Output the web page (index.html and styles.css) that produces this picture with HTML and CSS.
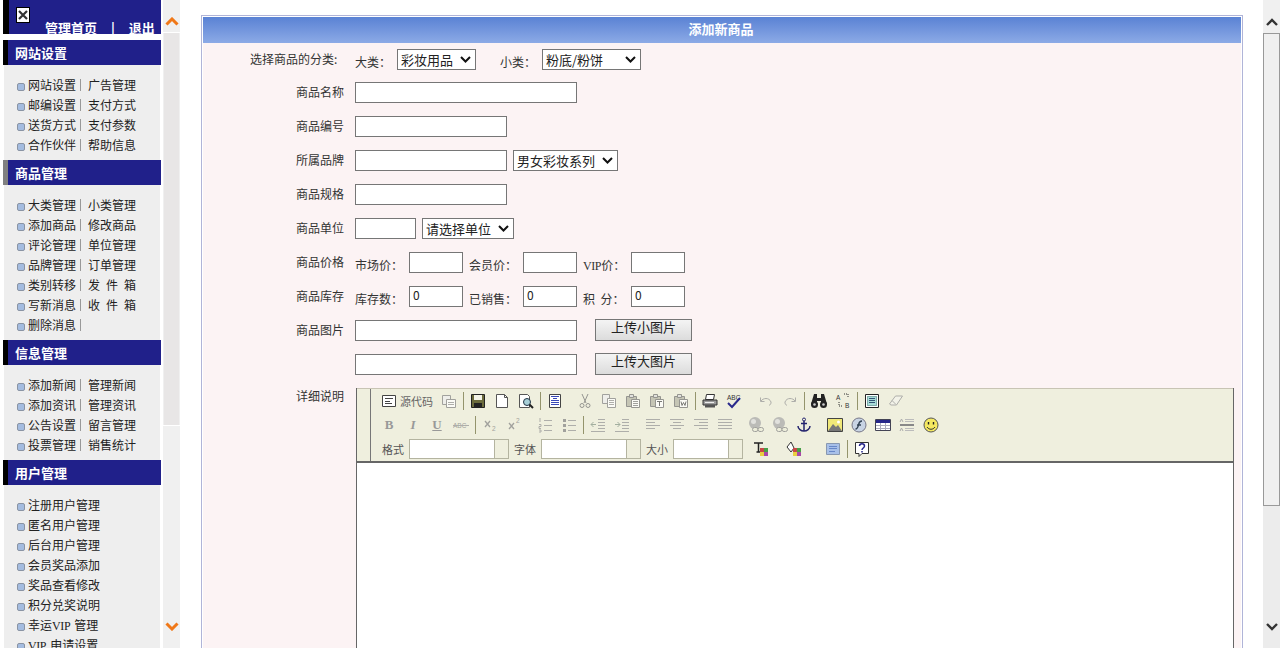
FILE: index.html
```html
<!DOCTYPE html>
<html lang="zh-CN">
<head>
    <meta charset="UTF-8">
    <title>添加新商品</title>
    <link rel="stylesheet" href="styles.css">
</head>
<body>
<svg class="sprite" width="0" height="0">
    <symbol id="i-source" viewBox="0 0 16 16"><path d="M1.5 2.500h13v11h-13z" fill="#fff" stroke="#444"/><path d="M4 5.500h8M4 8.500h5M4 10.500h7" stroke="#444"/></symbol>
    <symbol id="i-template" viewBox="0 0 16 16"><path d="M1.5 2.500h8v9h-8z" fill="#eee" stroke="#888"/><path d="M5.500 6.500h9v8h-9z" fill="#fff" stroke="#888"/><path d="M7 9.500h6M7 11.500h6" stroke="#999"/></symbol>
    <symbol id="i-save" viewBox="0 0 16 16"><path d="M1.500 1.500h13v13h-13z" fill="#6b6b3c" stroke="#222"/><path d="M4 2h8v5H4z" fill="#f4f4e8"/><path d="M4 10h8v5H4z" fill="#222"/></symbol>
    <symbol id="i-new" viewBox="0 0 16 16"><path d="M2.500 1.500h8l3 3v10h-11z" fill="#fff" stroke="#555"/><path d="M10.500 1.500v3h3" fill="none" stroke="#555"/></symbol>
    <symbol id="i-preview" viewBox="0 0 16 16"><path d="M1.500 1.500h8l2 2v11h-10z" fill="#fff" stroke="#555"/><circle cx="9" cy="9" r="3.500" fill="#a8d0d8" stroke="#234"/><path d="M11.500 11.500l3.500 3.500" stroke="#222" stroke-width="2"/></symbol>
    <symbol id="i-doc" viewBox="0 0 16 16"><path d="M2.500 1.500h11v13h-11z" fill="#fff" stroke="#444"/><path d="M4 3.500h8M6 5.500h4M4 7.500h8M4 9.500h8M4 11.500h8" stroke="#3848b8"/></symbol>
    <symbol id="i-cut" viewBox="0 0 16 16"><path d="M5 1l4 9M11 1l-4 9" stroke="#777" fill="none"/><circle cx="5" cy="12.500" r="2" fill="none" stroke="#777"/><circle cx="11" cy="12.500" r="2" fill="none" stroke="#777"/></symbol>
    <symbol id="i-copy" viewBox="0 0 16 16"><path d="M1.500 1.500h7v9h-7z" fill="#eee" stroke="#888"/><path d="M6.500 5.500h8v9h-8z" fill="#fff" stroke="#888"/><path d="M8 7.500h5M8 9.500h5M8 11.500h5" stroke="#999"/></symbol>
    <symbol id="i-paste" viewBox="0 0 16 16"><path d="M1.500 3.500h10v10h-10z" fill="#b8b8a8" stroke="#777"/><path d="M4.500 1.500h4v3h-4z" fill="#ddd" stroke="#777"/><path d="M6.500 6.500h8v8h-8z" fill="#fff" stroke="#777"/><path d="M8 8.500h5M8 10.500h5M8 12.500h5" stroke="#888"/></symbol>
    <symbol id="i-paste-t" viewBox="0 0 16 16"><path d="M1.500 3.500h10v10h-10z" fill="#b8b8a8" stroke="#777"/><path d="M4.500 1.500h4v3h-4z" fill="#ddd" stroke="#777"/><path d="M6.500 6.500h8v8h-8z" fill="#fff" stroke="#777"/><path d="M8 8.500h5M10.500 8.500v4.500" stroke="#555"/></symbol>
    <symbol id="i-paste-w" viewBox="0 0 16 16"><path d="M1.500 3.500h10v10h-10z" fill="#b8b8a8" stroke="#777"/><path d="M4.500 1.500h4v3h-4z" fill="#ddd" stroke="#777"/><path d="M6.500 6.500h8v8h-8z" fill="#fff" stroke="#777"/><path d="M8 8.500l1 4 1.500-3 1.500 3 1-4" fill="none" stroke="#555"/></symbol>
    <symbol id="i-print" viewBox="0 0 16 16"><path d="M4.500 1.500h8l-1 5h-8z" fill="#fff" stroke="#333"/><path d="M1 7h14v5H1z" fill="#9a9a9a" stroke="#333"/><path d="M3 12h10v2.500H3z" fill="#555"/><path d="M3 9.500h9" stroke="#eee"/></symbol>
    <symbol id="i-undo" viewBox="0 0 16 16"><path d="M2.500 4.500v4h4M3 8c2-3 8-4 10 1 .4 1.500-1 3-2 3.500" fill="none" stroke="#999"/></symbol>
    <symbol id="i-redo" viewBox="0 0 16 16"><path d="M13.500 4.500v4h-4M13 8c-2-3-8-4-10 1-.4 1.500 1 3 2 3.500" fill="none" stroke="#999"/></symbol>
    <symbol id="i-find" viewBox="0 0 16 16"><path d="M3 1h3v4h4V1h3l3 10H10V8H6v3H0z" fill="#222"/><circle cx="3.500" cy="11.500" r="3.500" fill="#222"/><circle cx="12.500" cy="11.500" r="3.500" fill="#222"/><circle cx="3.500" cy="11.500" r="1.300" fill="#ccc"/><circle cx="12.500" cy="11.500" r="1.300" fill="#ccc"/></symbol>
    <symbol id="i-selall" viewBox="0 0 16 16"><path d="M1.500 1.500h13v13h-13z" fill="#fff" stroke="#222"/><path d="M3.500 3.500h9v9h-9z" fill="#a8dcd8" stroke="#2a6a68" stroke-dasharray="1 1"/><path d="M5 5.500h6M5 7.500h6M5 9.500h6" stroke="#357"/></symbol>
    <symbol id="i-erase" viewBox="0 0 16 16"><path d="M1.500 11l6-8h7l-6 9H3z" fill="#f4f4ec" stroke="#999"/><path d="M4 7.500l4 4" stroke="#999"/></symbol>
    <symbol id="i-ol" viewBox="0 0 16 16"><path d="M7 3.500h8M7 8.500h8M7 13.500h8" stroke="#999"/><path d="M3 1v4M2 7.500h2v2H2v2h2M2 13h2v2H2" fill="none" stroke="#999"/></symbol>
    <symbol id="i-ul" viewBox="0 0 16 16"><path d="M7 3.500h8M7 8.500h8M7 13.500h8" stroke="#999"/><path d="M2 2h3v3H2zM2 7h3v3H2zM2 12h3v3H2z" fill="#888"/></symbol>
    <symbol id="i-outdent" viewBox="0 0 16 16"><path d="M8 2.500h7M8 5.500h7M8 8.500h7M8 11.500h7M1 14.500h14" stroke="#999"/><path d="M1 7.500h5M3.500 5L1 7.500 3.500 10" fill="none" stroke="#8a9a8a"/></symbol>
    <symbol id="i-indent" viewBox="0 0 16 16"><path d="M8 2.500h7M8 5.500h7M8 8.500h7M8 11.500h7M1 14.500h14" stroke="#999"/><path d="M1 7.500h5M3.500 5L6 7.500 3.500 10" fill="none" stroke="#8a9a8a"/></symbol>
    <symbol id="i-left" viewBox="0 0 16 16"><path d="M1 2.500h14M1 5.500h9M1 8.500h14M1 11.500h9" stroke="#999"/></symbol>
    <symbol id="i-center" viewBox="0 0 16 16"><path d="M1 2.500h14M4 5.500h8M1 8.500h14M4 11.500h8" stroke="#999"/></symbol>
    <symbol id="i-right" viewBox="0 0 16 16"><path d="M1 2.500h14M6 5.500h9M1 8.500h14M6 11.500h9" stroke="#999"/></symbol>
    <symbol id="i-justify" viewBox="0 0 16 16"><path d="M1 2.500h14M1 5.500h14M1 8.500h14M1 11.500h14" stroke="#999"/></symbol>
    <symbol id="i-link" viewBox="0 0 16 16"><circle cx="7" cy="6" r="6" fill="#aaa"/><circle cx="5.500" cy="4.500" r="2.500" fill="#ddd"/><rect x="4.500" y="10.500" width="5.500" height="4" rx="2" fill="#ecedd9" stroke="#888"/><rect x="10" y="10.500" width="5.500" height="4" rx="2" fill="#ecedd9" stroke="#888"/></symbol>
    <symbol id="i-anchor" viewBox="0 0 16 16"><circle cx="8" cy="2.500" r="1.500" fill="none" stroke="#24246e"/><path d="M8 4v10M5 6.500h6" stroke="#24246e" stroke-width="1.500"/><path d="M2 9c0 3 3 5 6 5s6-2 6-5" fill="none" stroke="#24246e" stroke-width="1.500"/></symbol>
    <symbol id="i-image" viewBox="0 0 16 16"><path d="M.5 1.500h15v13H.5z" fill="#f0e878" stroke="#444"/><path d="M1 14l5-7 3 3 2-2 4 6z" fill="#777"/><circle cx="11.500" cy="5" r="1.500" fill="#fff"/></symbol>
    <symbol id="i-flash" viewBox="0 0 16 16"><circle cx="8" cy="8" r="7" fill="#c8d4e4" stroke="#778"/><path d="M11 4C8 4 8 6 7.500 8S6 12 4.500 12M6 8h4" fill="none" stroke="#345" stroke-width="1.300"/></symbol>
    <symbol id="i-table" viewBox="0 0 16 16"><path d="M.5 2.500h15v11H.5z" fill="#fff" stroke="#445"/><path d="M1 3h14v3H1z" fill="#26268a"/><path d="M1 8.500h14M1 11.500h14M5.500 6v7M10.500 6v7" stroke="#aab"/></symbol>
    <symbol id="i-hr" viewBox="0 0 16 16"><path d="M1 8h14" stroke="#888" stroke-width="2"/><path d="M6 2.500h9M6 4.500h9M6 11.500h9M6 13.500h9" stroke="#bbb"/><path d="M1 5l1.500-3L4 5M1 14l1.500-3L4 14" fill="none" stroke="#aaa"/></symbol>
    <symbol id="i-smile" viewBox="0 0 16 16"><circle cx="8" cy="8" r="7" fill="#f4e860" stroke="#555"/><path d="M5.500 5v2.500M10.500 5v2.500" stroke="#222" stroke-width="1.400"/><path d="M4 10c2 3 6 3 8 0" fill="none" stroke="#333"/></symbol>
    <symbol id="i-color" viewBox="0 0 16 16"><path d="M1 2h9M5.500 2v9M3.500 11h4" stroke="#222" stroke-width="1.500"/><path d="M7 7h4v4H7z" fill="#c84848"/><path d="M11 7h4v4h-4z" fill="#48a048"/><path d="M7 11h4v4H7z" fill="#e8d040"/><path d="M11 11h4v4h-4z" fill="#a848a8"/></symbol>
    <symbol id="i-bgcolor" viewBox="0 0 16 16"><path d="M5 1L1 6l4 5 3-4z" fill="#fff" stroke="#333"/><path d="M7 7h4v4H7z" fill="#c84848"/><path d="M11 7h4v4h-4z" fill="#48a048"/><path d="M7 11h4v4H7z" fill="#e8d040"/><path d="M11 11h4v4h-4z" fill="#a848a8"/></symbol>
    <symbol id="i-block" viewBox="0 0 16 16"><path d="M1.500 2.500h13v11h-13z" fill="#a8c0e8" stroke="#8898b0"/><path d="M4 5.500h8M4 7.500h8M4 10.500h6" stroke="#6888c8"/></symbol>
    <symbol id="i-help" viewBox="0 0 16 16"><path d="M1.500 1.500h13v11H8l-3 3v-3H1.500z" fill="#fff" stroke="#333"/><path d="M5.500 5c0-3 5-3 5 0 0 2-2.500 2-2.500 4M8 10v1.500" fill="none" stroke="#26268a" stroke-width="1.500"/></symbol>
</svg>

<div class="page">
    <aside class="sidebar">
        <div class="top-bar">
            <span class="broken-img">
                <svg width="10" height="10" viewBox="0 0 10 10"><path d="M1 1l8 8M9 1l-8 8" stroke="#333" stroke-width="2.200"/></svg>
            </span>
            <div class="top-links">管理首页 <span class="top-sep">|</span> 退出</div>
        </div>

        <h3 class="menu-head">网站设置</h3>
        <ul class="menu">
            <li><span class="cell">网站设置</span><span class="bar"></span><span>广告管理</span></li>
            <li><span class="cell">邮编设置</span><span class="bar"></span><span>支付方式</span></li>
            <li><span class="cell">送货方式</span><span class="bar"></span><span>支付参数</span></li>
            <li><span class="cell">合作伙伴</span><span class="bar"></span><span>帮助信息</span></li>
        </ul>

        <h3 class="menu-head menu-head-gray">商品管理</h3>
        <ul class="menu">
            <li><span class="cell">大类管理</span><span class="bar"></span><span>小类管理</span></li>
            <li><span class="cell">添加商品</span><span class="bar"></span><span>修改商品</span></li>
            <li><span class="cell">评论管理</span><span class="bar"></span><span>单位管理</span></li>
            <li><span class="cell">品牌管理</span><span class="bar"></span><span>订单管理</span></li>
            <li><span class="cell">类别转移</span><span class="bar"></span><span class="wide">发件箱</span></li>
            <li><span class="cell">写新消息</span><span class="bar"></span><span class="wide">收件箱</span></li>
            <li><span class="cell">删除消息</span><span class="bar"></span></li>
        </ul>

        <h3 class="menu-head">信息管理</h3>
        <ul class="menu">
            <li><span class="cell">添加新闻</span><span class="bar"></span><span>管理新闻</span></li>
            <li><span class="cell">添加资讯</span><span class="bar"></span><span>管理资讯</span></li>
            <li><span class="cell">公告设置</span><span class="bar"></span><span>留言管理</span></li>
            <li><span class="cell">投票管理</span><span class="bar"></span><span>销售统计</span></li>
        </ul>

        <h3 class="menu-head">用户管理</h3>
        <ul class="menu">
            <li><span>注册用户管理</span></li>
            <li><span>匿名用户管理</span></li>
            <li><span>后台用户管理</span></li>
            <li><span>会员奖品添加</span></li>
            <li><span>奖品查看修改</span></li>
            <li><span>积分兑奖说明</span></li>
            <li><span>幸运<span class="latin">VIP </span>管理</span></li>
            <li><span><span class="latin">VIP </span>申请设置</span></li>
        </ul>
    </aside>

    <div class="side-scroll">
        <div class="side-cap">
            <svg width="14" height="9" viewBox="0 0 14 9"><path d="M1.500 7.500L7 2l5.500 5.500" fill="none" stroke="#f07818" stroke-width="3"/></svg>
        </div>
        <div class="side-track"></div>
        <div class="side-rest">
            <svg width="14" height="9" viewBox="0 0 14 9"><path d="M1.500 1.500L7 7l5.500-5.500" fill="none" stroke="#f07818" stroke-width="3"/></svg>
        </div>
    </div>

    <main class="main">
        <section class="panel">
            <h2 class="panel-title">添加新商品</h2>
            <div class="panel-body">
                <div class="row row-first">
                    <label class="row-label row-label-long">选择商品的分类:&nbsp;</label>
                    <div class="row-fields">
                        <span class="tag tag-big">大类：</span>
                        <select class="pick pick-big"><option>彩妆用品</option></select>
                        <span class="tag tag-small">小类：</span>
                        <select class="pick pick-small"><option>粉底/粉饼</option></select>
                    </div>
                </div>
                <div class="row">
                    <label class="row-label">商品名称</label>
                    <div class="row-fields"><input class="txt txt-long"></div>
                </div>
                <div class="row">
                    <label class="row-label">商品编号</label>
                    <div class="row-fields"><input class="txt txt-mid"></div>
                </div>
                <div class="row">
                    <label class="row-label">所属品牌</label>
                    <div class="row-fields gap6">
                        <input class="txt txt-mid">
                        <select class="pick pick-brand"><option>男女彩妆系列</option></select>
                    </div>
                </div>
                <div class="row">
                    <label class="row-label">商品规格</label>
                    <div class="row-fields"><input class="txt txt-mid"></div>
                </div>
                <div class="row">
                    <label class="row-label">商品单位</label>
                    <div class="row-fields gap6">
                        <input class="txt txt-unit">
                        <select class="pick pick-unit"><option>请选择单位</option></select>
                    </div>
                </div>
                <div class="row">
                    <label class="row-label">商品价格</label>
                    <div class="row-fields">
                        <span class="tag tag-price">市场价：</span><input class="txt txt-num">
                        <span class="tag tag-price tag-next">会员价：</span><input class="txt txt-num">
                        <span class="tag tag-price tag-last"><span class="latin">VIP</span>价：</span><input class="txt txt-num">
                    </div>
                </div>
                <div class="row">
                    <label class="row-label">商品库存</label>
                    <div class="row-fields">
                        <span class="tag tag-price">库存数：</span><input class="txt txt-num" value="0">
                        <span class="tag tag-price tag-next">已销售：</span><input class="txt txt-num" value="0">
                        <span class="tag tag-price tag-last">积&nbsp;&nbsp;分：</span><input class="txt txt-num" value="0">
                    </div>
                </div>
                <div class="row">
                    <label class="row-label">商品图片</label>
                    <div class="row-fields gap18">
                        <input class="txt txt-long">
                        <button class="upload">上传小图片</button>
                    </div>
                </div>
                <div class="row">
                    <label class="row-label"></label>
                    <div class="row-fields gap18">
                        <input class="txt txt-long">
                        <button class="upload">上传大图片</button>
                    </div>
                </div>
                <div class="row row-editor">
                    <label class="row-label">详细说明</label>
                    <div class="editor">
                        <div class="toolbar">
                            <div class="tool-row">
                                <span class="tool tool-text"><svg><use href="#i-source"/></svg>源代码</span>
                                <span class="tool off"><svg><use href="#i-template"/></svg></span>
                                <i class="sep"></i>
                                <span class="tool"><svg><use href="#i-save"/></svg></span>
                                <span class="tool"><svg><use href="#i-new"/></svg></span>
                                <span class="tool"><svg><use href="#i-preview"/></svg></span>
                                <i class="sep"></i>
                                <span class="tool"><svg><use href="#i-doc"/></svg></span>
                                <b class="gap"></b>
                                <span class="tool off"><svg><use href="#i-cut"/></svg></span>
                                <span class="tool off"><svg><use href="#i-copy"/></svg></span>
                                <span class="tool off"><svg><use href="#i-paste"/></svg></span>
                                <span class="tool off"><svg><use href="#i-paste-t"/></svg></span>
                                <span class="tool off"><svg><use href="#i-paste-w"/></svg></span>
                                <i class="sep"></i>
                                <span class="tool"><svg><use href="#i-print"/></svg></span>
                                <span class="tool"><svg viewBox="0 0 16 16"><text x="1" y="6.500" class="svg-small">ABC</text><path d="M2 10l4 4 8-9" fill="none" stroke="#2a2a8c" stroke-width="2"/></svg></span>
                                <b class="gap gap8"></b>
                                <span class="tool off"><svg><use href="#i-undo"/></svg></span>
                                <span class="tool off"><svg><use href="#i-redo"/></svg></span>
                                <i class="sep"></i>
                                <span class="tool"><svg><use href="#i-find"/></svg></span>
                                <span class="tool"><svg viewBox="0 0 16 16"><text x="1" y="7" class="svg-small">A</text><text x="10" y="15" class="svg-small">B</text><path d="M9 1h4v4M4 9v4h4" fill="none" stroke="#333" stroke-dasharray="1 1"/></svg></span>
                                <i class="sep"></i>
                                <span class="tool"><svg><use href="#i-selall"/></svg></span>
                                <span class="tool off"><svg><use href="#i-erase"/></svg></span>
                            </div>
                            <div class="tool-row">
                                <span class="tool letter letter-b">B</span>
                                <span class="tool letter letter-i">I</span>
                                <span class="tool letter letter-u">U</span>
                                <span class="tool off"><svg viewBox="0 0 16 16"><text x="0" y="11" class="svg-small svg-gray">ABC</text><path d="M0 8.500h16" stroke="#999"/></svg></span>
                                <i class="sep"></i>
                                <span class="tool off"><svg viewBox="0 0 16 16"><path d="M3 4l5 6M8 4l-5 6" stroke="#888" fill="none" stroke-width="1.300"/><text x="10" y="14" class="svg-small svg-gray">2</text></svg></span>
                                <span class="tool off"><svg viewBox="0 0 16 16"><path d="M3 6l5 6M8 6l-5 6" stroke="#888" fill="none" stroke-width="1.300"/><text x="10" y="6" class="svg-small svg-gray">2</text></svg></span>
                                <b class="gap gap7"></b>
                                <span class="tool off"><svg><use href="#i-ol"/></svg></span>
                                <span class="tool off"><svg><use href="#i-ul"/></svg></span>
                                <i class="sep"></i>
                                <span class="tool off"><svg><use href="#i-outdent"/></svg></span>
                                <span class="tool off"><svg><use href="#i-indent"/></svg></span>
                                <b class="gap gap7"></b>
                                <span class="tool off"><svg><use href="#i-left"/></svg></span>
                                <span class="tool off"><svg><use href="#i-center"/></svg></span>
                                <span class="tool off"><svg><use href="#i-right"/></svg></span>
                                <span class="tool off"><svg><use href="#i-justify"/></svg></span>
                                <b class="gap gap7"></b>
                                <span class="tool off"><svg><use href="#i-link"/></svg></span>
                                <span class="tool off"><svg><use href="#i-link"/></svg></span>
                                <span class="tool"><svg><use href="#i-anchor"/></svg></span>
                                <b class="gap gap7"></b>
                                <span class="tool"><svg><use href="#i-image"/></svg></span>
                                <span class="tool"><svg><use href="#i-flash"/></svg></span>
                                <span class="tool"><svg><use href="#i-table"/></svg></span>
                                <span class="tool"><svg><use href="#i-hr"/></svg></span>
                                <span class="tool"><svg><use href="#i-smile"/></svg></span>
                            </div>
                            <div class="tool-row">
                                <span class="combo-label">格式</span>
                                <span class="combo combo-wide"><span class="combo-box"></span><span class="combo-btn"></span></span>
                                <span class="combo-label">字体</span>
                                <span class="combo combo-wide"><span class="combo-box"></span><span class="combo-btn"></span></span>
                                <span class="combo-label">大小</span>
                                <span class="combo combo-size"><span class="combo-box"></span><span class="combo-btn"></span></span>
                                <b class="gap"></b>
                                <span class="tool"><svg><use href="#i-color"/></svg></span>
                                <b class="gap gap9"></b>
                                <span class="tool"><svg><use href="#i-bgcolor"/></svg></span>
                                <b class="gap gap15"></b>
                                <span class="tool"><svg><use href="#i-block"/></svg></span>
                                <i class="sep"></i>
                                <span class="tool"><svg><use href="#i-help"/></svg></span>
                            </div>
                        </div>
                        <div class="edit-area"></div>
                    </div>
                </div>
            </div>
        </section>
    </main>

    <div class="page-scroll">
        <div class="scroll-cap">
            <svg width="12" height="8" viewBox="0 0 12 8"><path d="M1 7l5-5 5 5" fill="none" stroke="#333" stroke-width="2.400"/></svg>
        </div>
        <div class="scroll-thumb"></div>
        <div class="scroll-rest">
            <svg width="12" height="8" viewBox="0 0 12 8"><path d="M1 1l5 5 5-5" fill="none" stroke="#333" stroke-width="2.400"/></svg>
        </div>
    </div>
</div>
</body>
</html>
```

FILE: styles.css
```css
* { box-sizing: border-box; }
html, body { margin: 0; padding: 0; height: 100%; overflow: hidden; }
body { background: #fff; color: #222; font-family: "Noto Sans CJK SC", "Liberation Sans", sans-serif; font-size: 12px; }
.sprite { position: absolute; }
.page { display: flex; height: 648px; overflow: hidden; }
.latin { font-family: "Liberation Serif", serif; font-size: 12px; letter-spacing: -0.4px; white-space: pre; }

/* left menu */
.sidebar { width: 163px; flex: none; padding-left: 3px; overflow: hidden; }
.top-bar { display: flex; width: 158px; height: 34px; margin-bottom: 6px; background: #20208a; border-left: 6px solid #000; overflow: hidden; }
.broken-img { display: flex; align-items: center; justify-content: center; width: 14px; height: 16px; margin: 7px 0 0 7px; background: #fff; border: 1px solid #000; }
.top-links { margin: 19px 0 0 15px; color: #fff; font-size: 13px; font-weight: bold; line-height: 18px; white-space: pre; }
.top-sep { margin: 0 11px; }
.menu-head { width: 158px; height: 25px; margin: 0; padding-left: 7px; background: #20208a; border-left: 5px solid #000; color: #fff; font-size: 13px; font-weight: bold; line-height: 25px; }
.menu-head-gray { border-left-color: #808080; }
.menu { width: 156px; margin: 0 0 0 1px; padding: 10px 0 5px 24px; background: #eeeeee; list-style: none; }
.menu li { display: flex; align-items: center; height: 20px; color: #222; line-height: 20px; white-space: pre; position: relative; }
.menu li::before { content: ""; position: absolute; left: -11px; top: 8px; width: 6px; height: 6px; background: #a4bce0; border: 1px solid #8a94a4; border-radius: 2px; }
.menu .latin { margin-right: 2px; }
.cell { width: 48px; }
.bar { width: 1px; height: 12px; margin: 0 7px 0 4px; background: #999; }
.wide { width: 48px; text-align-last: justify; }

/* fake frame scroller */
.side-scroll { display: flex; flex-direction: column; width: 17px; flex: none; background: #f0f0f0; }
.side-cap { display: flex; justify-content: center; align-items: center; height: 33px; padding-top: 11px; background: #f0f0f0; border-bottom: 1px solid #fff; }
.side-track { height: 392px; margin: 0 1px; background: #e8e6e6; }
.side-rest { display: flex; flex: 1; justify-content: center; align-items: flex-end; padding-bottom: 17px; border-top: 1px solid #fff; }

/* form panel */
.main { flex: 1; min-width: 0; padding: 15px 20px 0 21px; overflow: hidden; }
.panel { height: 700px; padding: 1px; background: #fff; border: 1px solid #b0b4d8; }
.panel-title { height: 26px; margin: 0; padding-right: 2px; background: linear-gradient(#5a82d4, #8caae6); color: #fff; font-size: 13px; font-weight: bold; line-height: 23px; text-align: center; }
.panel-body { height: 660px; padding-top: 6px; background: #fcf3f4; }
.row { display: flex; height: 34px; color: #333; }
.row-first { height: 33px; }
.row-label { width: 141px; flex: none; line-height: 19px; text-align: right; }
.row-label-long { width: 137px; line-height: 20px; }
.row-first .row-fields { padding-left: 15px; }
.row-fields { display: flex; align-items: flex-start; padding-left: 11px; }
.gap6 { gap: 6px; }
.gap18 { gap: 18px; }
.tag { flex: none; padding-top: 3px; line-height: 20px; }
.tag-big { width: 42px; }
.tag-small { width: 42px; margin-left: 24px; }
.tag-price { width: 54px; }
.tag-next { width: 60px; padding-left: 6px; }
.tag-last { padding-left: 6px; }
.txt { height: 21px; padding: 0 3px 4px; background: #fff; border: 1px solid #767676; border-radius: 0; color: #222; font-family: inherit; font-size: 12px; }
.txt-long { width: 222px; }
.txt-mid { width: 152px; }
.txt-unit { width: 61px; }
.txt-num { width: 54px; }
.pick { height: 21px; padding: 0 0 1px 3px; appearance: none; background: #fff url("data:image/svg+xml,%3Csvg xmlns='http://www.w3.org/2000/svg' width='11' height='7' viewBox='0 0 11 7'%3E%3Cpath d='M1 1l4.500 4.500L10 1' fill='none' stroke='%23111' stroke-width='2'/%3E%3C/svg%3E") no-repeat right 4px center; border: 1px solid #767676; border-radius: 0; color: #222; font-family: inherit; font-size: 13px; }
.pick-big { width: 79px; }
.pick-small { width: 99px; }
.pick-brand { width: 105px; }
.pick-unit { width: 92px; }
.upload { width: 97px; height: 22px; margin-top: -1px; padding: 0 0 6px; background: linear-gradient(#f4f4f4, #dcdcdc); border: 1px solid #767676; border-radius: 0; color: #222; font-family: inherit; font-size: 13px; line-height: 10px; }

/* editor */
.row-editor { height: 300px; }
.row-editor .row-label { line-height: 15px; }
.editor { width: 878px; height: 300px; margin-left: 12px; border-left: 1px solid #666; border-right: 1px solid #666; flex: none; }
.toolbar { height: 75px; padding: 0 0 0 20px; background: #efefde; border-top: 1px solid #c8c4b4; border-bottom: 2px solid #666; position: relative; }
.toolbar::before { content: ""; position: absolute; left: 13px; top: 0; bottom: 0; width: 1px; background: #777; }
.tool-row { display: flex; align-items: center; height: 24px; }
.tool { display: flex; align-items: center; justify-content: center; width: 24px; height: 24px; flex: none; }
.tool svg { width: 16px; height: 16px; }
.tool.off svg { opacity: 0.75; }
.tool-text { width: 60px; justify-content: flex-start; padding-left: 4px; color: #666; font-size: 11px; gap: 3px; }
.svg-small { font-family: "Liberation Sans", sans-serif; font-size: 6.5px; fill: #333; }
.svg-gray { fill: #888; }
.letter { color: #999; font-family: "Liberation Serif", serif; font-size: 13px; }
.letter-b { font-weight: bold; }
.letter-i { font-style: italic; font-weight: bold; }
.letter-u { font-weight: bold; text-decoration: underline; }
.sep { width: 3px; height: 18px; flex: none; margin-left: 2px; border-left: 1px solid #94946c; }
.gap { width: 6px; flex: none; }
.gap7 { width: 7px; }
.gap8 { width: 8px; }
.gap9 { width: 9px; }
.gap15 { width: 15px; }
.combo-label { margin: 0 5px; color: #555; font-size: 11px; line-height: 24px; flex: none; width: 22px; }
.combo { display: flex; height: 20px; flex: none; border: 1px solid #b4b4a0; }
.combo-wide { width: 100px; }
.combo-size { width: 70px; }
.combo-box { flex: 1; background: #fff; }
.combo-btn { width: 14px; background: #efefde; border-left: 1px solid #b4b4a0; }
.edit-area { height: 225px; background: #fff; }

/* page scrollbar */
.page-scroll { display: flex; flex-direction: column; width: 17px; flex: none; background: #ececec; }
.scroll-cap { display: flex; justify-content: center; align-items: center; height: 33px; padding-top: 11px; background: #f0f0f0; }
.scroll-thumb { height: 473px; background: #f0f0f0; border: 1px solid #999; }
.scroll-rest { display: flex; flex: 1; justify-content: center; align-items: flex-end; padding-bottom: 17px; }
```
